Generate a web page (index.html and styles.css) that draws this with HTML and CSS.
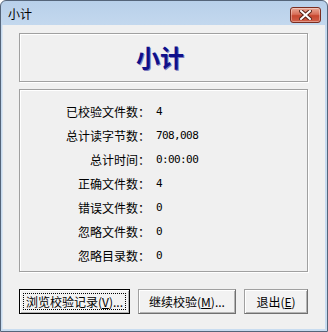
FILE: index.html
```html
<!DOCTYPE html>
<html lang="zh-CN">

<head>
    <meta charset="UTF-8">
    <title>小计</title>
    <link rel="stylesheet" href="styles.css">
</head>

<body>

    <div class="window">
        <div class="titlebar">
            <span class="title">小计</span>
            <button class="close" type="button">
                <svg width="13" height="10" viewBox="0 0 13 10">
                    <path d="M2 1 L11 9 M11 1 L2 9" stroke="#5a2418" stroke-width="4" stroke-linecap="square" />
                    <path d="M2 1 L11 9 M11 1 L2 9" stroke="#ffffff" stroke-width="2" stroke-linecap="square" />
                </svg>
            </button>
        </div>

        <div class="client">
            <div class="panel heading">小计</div>

            <div class="panel stats">
                <div class="row"><span class="label">已校验文件数：</span><span class="value">4</span></div>
                <div class="row"><span class="label">总计读字节数：</span><span class="value">708,008</span></div>
                <div class="row"><span class="label">总计时间：</span><span class="value">0:00:00</span></div>
                <div class="row"><span class="label">正确文件数：</span><span class="value">4</span></div>
                <div class="row"><span class="label">错误文件数：</span><span class="value">0</span></div>
                <div class="row"><span class="label">忽略文件数：</span><span class="value">0</span></div>
                <div class="row"><span class="label">忽略目录数：</span><span class="value">0</span></div>
            </div>

            <div class="actions">
                <button class="btn default" type="button"><span class="focus">浏览校验记录(<u>V</u>)...</span></button>
                <button class="btn second" type="button">继续校验(<u>M</u>)...</button>
                <button class="btn third" type="button">退出(<u>E</u>)</button>
            </div>
        </div>
    </div>

</body>

</html>
```

FILE: styles.css
```css
body {
    margin: 0;
    font-family: "Noto Sans CJK SC", "Liberation Sans", sans-serif;
    font-size: 12px;
    background-color: #ffffff;
}

.window {
    width: 328px;
    height: 332px;
    box-sizing: border-box;
    border: 1px solid #55657a;
    border-radius: 6px 6px 0 0;
    background: linear-gradient(#b8d0ea, #c6daef 30px, #c8dcf0);
    padding: 0 2px 2px 1px;
    display: flex;
    flex-direction: column;
}

.titlebar {
    height: 24px;
    display: flex;
    align-items: center;
    justify-content: space-between;
    padding: 0 4px 0 6px;
}

.title {
    color: #000000;
    font-size: 12px;
    line-height: 14px;
    margin-top: 1px;
}

.close {
    width: 31px;
    height: 16px;
    margin-top: 3px;
    padding: 0;
    border: 1px solid #7a2d20;
    border-radius: 3px;
    background: linear-gradient(#e9a997, #d9705a 45%, #c7472f 55%, #d0604a);
    box-shadow: inset 0 0 0 1px rgba(255, 255, 255, 0.35);
    display: flex;
    align-items: center;
    justify-content: center;
}

.client {
    flex: 1;
    background-color: #f0f0f0;
    border-left: 1px solid #dbe6f2;
    padding: 8px 0 0 16px;
}

.panel {
    width: 289px;
    box-sizing: border-box;
    border: 1px solid #a0a0a0;
    box-shadow: 1px 1px 0 #ffffff, inset 1px 1px 0 #ffffff;
}

.heading {
    height: 49px;
    line-height: 46px;
    text-align: center;
    font-size: 24px;
    font-weight: bold;
    color: #10108a;
    padding-right: 7px;
    text-shadow: 1px 1px 0 #7d7dbd;
}

.stats {
    height: 183px;
    margin-top: 7px;
    padding-top: 9px;
}

.row {
    display: flex;
    height: 24px;
    align-items: center;
}

.label {
    width: 130px;
    text-align: right;
    color: #000000;
}

.value {
    margin-left: 6px;
    font-family: "DejaVu Sans Mono", monospace;
    font-size: 11px;
    letter-spacing: -0.6px;
    color: #000000;
}

.actions {
    display: flex;
    gap: 8px;
    margin-top: 17px;
}

.btn {
    height: 25px;
    padding: 0;
    font-family: "Noto Sans CJK SC", "Liberation Sans", sans-serif;
    font-size: 12px;
    color: #000000;
    background-color: #f2f2f2;
    border: 1px solid #707070;
    border-top-color: #a0a0a0;
    border-left-color: #a0a0a0;
    box-shadow: inset 1px 1px 0 #ffffff, inset -1px -1px 0 #b4b4b4;
    white-space: nowrap;
}

.btn u {
    text-underline-offset: 1px;
}

.default {
    width: 111px;
    border: 1px solid #000000;
    padding: 3px;
}

.focus {
    display: block;
    border: 1px dotted #000000;
    line-height: 15px;
}

.second {
    width: 98px;
}

.third {
    width: 64px;
}
```
